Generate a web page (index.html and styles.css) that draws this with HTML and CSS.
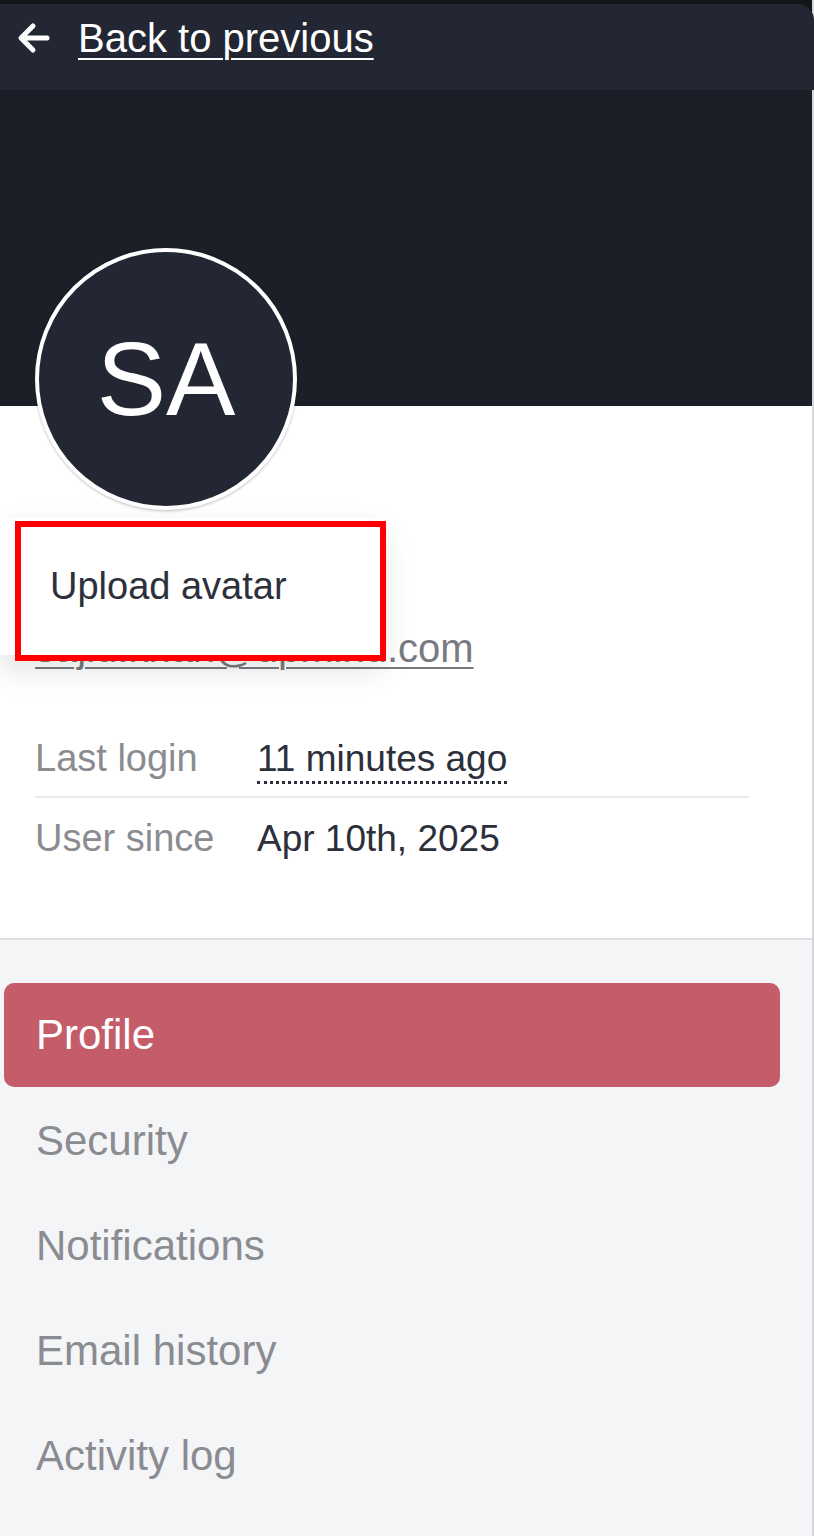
FILE: index.html
```html
<!DOCTYPE html>
<html lang="en">
<head>
  <meta charset="UTF-8" />
  <title>Account</title>
  <link rel="stylesheet" href="styles.css">
</head>
<body>
  <div class="page">

    <!-- TOP BAR -->
    <div class="topbar">
      <svg class="back-icon" viewBox="0 0 36 36" width="36" height="36">
        <path d="M31 18H6M17 6L5 18l12 12" fill="none" stroke="#fff" stroke-width="5" stroke-linecap="round" stroke-linejoin="round"/>
      </svg>
      <a href="#" class="back-link">Back to previous</a>
    </div>

    <!-- HEADER -->
    <div class="cover"></div>

    <div class="profile">
      <div class="avatar">SA</div>
      <a href="#" class="email">sajid.khan@upmind.com</a>

      <div class="info">
        <div class="info-row">
          <span class="label">Last login</span>
          <span class="value dotted">11 minutes ago</span>
        </div>
        <div class="info-row">
          <span class="label">User since</span>
          <span class="value">Apr 10th, 2025</span>
        </div>
      </div>

      <!-- avatar menu -->
      <div class="avatar-menu">
        <div class="menu-item">Upload avatar</div>
      </div>
      <div class="highlight"></div>
    </div>

    <!-- NAV -->
    <div class="nav">
      <a href="#" class="nav-item active">Profile</a>
      <a href="#" class="nav-item">Security</a>
      <a href="#" class="nav-item">Notifications</a>
      <a href="#" class="nav-item">Email history</a>
      <a href="#" class="nav-item">Activity log</a>
    </div>

  </div>
</body>
</html>
```
FILE: styles.css
```css
* {
  box-sizing: border-box;
}

body {
  margin: 0;
  font-family: 'Liberation Sans', Arial, sans-serif;
  background: #131519;
  color: #2b303b;
}

.page {
  width: 814px;
  min-height: 1536px;
  padding-top: 4px;
  background: linear-gradient(#131519 0, #131519 90px, #f4f5f7 90px);
  border-right: 2px solid #d6d7da;
}

.topbar {
  display: flex;
  align-items: center;
  height: 86px;
  padding: 0 0 18px 16px;
  background: #222733;
  border-top-right-radius: 16px;
  margin-right: -2px;
}

.back-icon {
  margin-right: 26px;
}

.back-link {
  color: #fff;
  font-size: 40px;
  text-decoration: underline;
  text-decoration-thickness: 2px;
  text-underline-offset: 6px;
}

.cover {
  height: 316px;
  background: #1b1f27;
}

.profile {
  display: flow-root;
  position: relative;
  background: #fff;
  padding: 0 0 59px 35px;
  border-bottom: 2px solid #dcdde0;
}

.avatar {
  width: 262px;
  height: 262px;
  margin-top: -158px;
  border-radius: 50%;
  border: 4px solid #fff;
  background: #222733;
  box-shadow: 0 1px 3px rgba(0,0,0,0.25);
  color: #fff;
  font-size: 104px;
  display: flex;
  align-items: center;
  justify-content: center;
}

.email {
  display: inline-block;
  margin: 116px 0 53px;
  color: #777a80;
  font-size: 40px;
  text-decoration: underline;
  text-decoration-thickness: 2px;
  text-underline-offset: 5px;
}

.info {
  width: 714px;
}

.info-row {
  display: flex;
  align-items: baseline;
  height: 72px;
  padding-top: 13px;
  font-size: 37px;
}

.info-row + .info-row {
  border-top: 2px solid #e8e9eb;
  height: 83px;
  padding-top: 19px;
}

.label {
  width: 222px;
  color: #8a8c91;
  font-size: 38px;
}

.value {
  color: #2b303b;
}

.dotted {
  border-bottom: 3px dotted #2b303b;
  padding-bottom: 1px;
}

.avatar-menu {
  position: absolute;
  left: 0;
  top: 112px;
  width: 382px;
  height: 137px;
  background: #fff;
  box-shadow: 0 14px 30px rgba(0,0,0,0.12);
  padding: 47px 0 0 50px;
}

.menu-item {
  font-size: 38px;
  color: #2b303b;
}

.highlight {
  position: absolute;
  left: 15px;
  top: 115px;
  width: 371px;
  height: 140px;
  border: 6px solid #ff0000;
}

.nav {
  padding: 43px 32px 0 4px;
}

.nav-item {
  display: flex;
  align-items: center;
  height: 105px;
  padding-left: 32px;
  font-size: 42px;
  color: #8a8c91;
  text-decoration: none;
}

.nav-item.active {
  height: 104px;
  margin-bottom: 1px;
  background: #c45c69;
  color: #fff;
  border-radius: 10px;
}
```
